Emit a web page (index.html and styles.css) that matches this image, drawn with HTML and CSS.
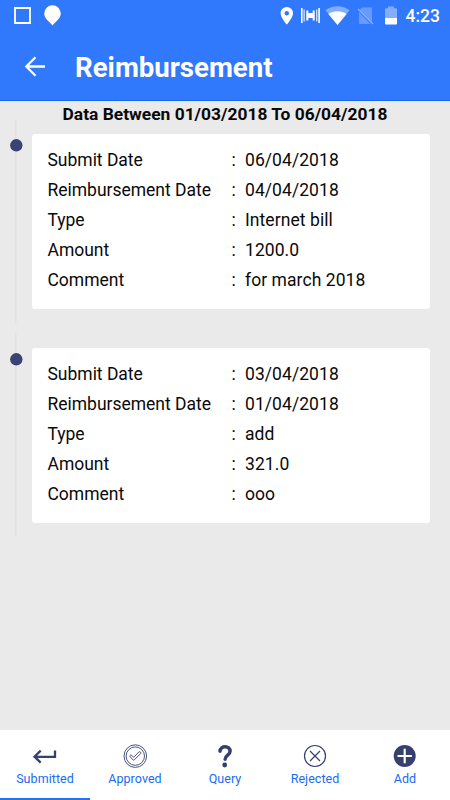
FILE: index.html
```html
<!DOCTYPE html>
<html lang="en">
<head>
<meta charset="utf-8">
<title>Reimbursement</title>
<link rel="stylesheet" href="styles.css">
</head>
<body>
<header class="header">
  <div class="status">
    <svg class="status-left" width="64" height="32" viewBox="0 0 64 32"><path d="M15 8h15v15H15z" fill="none" stroke="#fff" stroke-width="1.800"/><path d="M52.500 5.300a8.300 8.300 0 0 1 8.300 8.300c0 5-5.300 8.200-8.300 12-3-3.800-8.300-7-8.300-12a8.300 8.300 0 0 1 8.300-8.300z" fill="#fff"/></svg>
    <svg class="status-right" width="130" height="32" viewBox="0 0 130 32">
      <path fill="#fff" fill-rule="evenodd" d="M16.800 7a6.200 6.200 0 0 0-6.200 6.200c0 4.500 6.200 11.300 6.200 11.300s6.200-6.800 6.200-11.300A6.200 6.200 0 0 0 16.800 7zm0 4a2.200 2.200 0 1 1 0 4.400 2.200 2.200 0 0 1 0-4.400z"/>
      <path fill="#fff" d="M31 8h1.600v15H31zM33.600 9.500h1v12h-1zM36.300 10.500h2v2.500h4.400v-2.500h2v10h-2V18h-4.400v2.500h-2zM46.300 9.500h1v12h-1zM48.300 8h1.600v15h-1.600z"/>
      <path fill="#83adff" d="M55.500 10.300c7-5.300 17-5.300 24 0L67.500 25z"/>
      <path fill="#fff" d="M58.400 14c5-3.700 13.200-3.700 18.200 0L67.500 25z"/>
      <path fill="#6799ff" d="M92 7.500h9a1 1 0 0 1 1 1v14L89.500 10zM89 12l11.500 12H90a1 1 0 0 1-1-1z"/>
      <path d="M88 9l15 15" fill="none" stroke="#8bb2ff" stroke-width="1.300"/>
      <path fill="#83adff" d="M118 6.500v1.800h-2a1 1 0 0 0-1 1V18h12V9.300a1 1 0 0 0-1-1h-2V6.500z"/>
      <path fill="#fff" d="M115 18h12v5.500a1 1 0 0 1-1 1h-10a1 1 0 0 1-1-1z"/>
    </svg>
    <span class="clock">4:23</span>
  </div>
  <div class="toolbar">
    <svg class="back" width="22" height="22" viewBox="0 0 22 22"><path d="M21 10.500H2.500M11.500 1.300L2.300 10.500l9.200 9.200" fill="none" stroke="#fff" stroke-width="2.300"/></svg>
    <h1 class="title">Reimbursement</h1>
  </div>
</header>
<main class="content">
  <h2 class="range"><span class="range-text">Data Between 01/03/2018 To 06/04/2018</span></h2>
  <section class="entry">
    <div class="rail"><svg class="dot" width="14" height="14" viewBox="0 0 14 14"><circle cx="6.300" cy="6.300" r="6.200"/></svg></div>
    <dl class="card">
      <dt>Submit Date</dt><dd>06/04/2018</dd>
      <dt>Reimbursement Date</dt><dd>04/04/2018</dd>
      <dt>Type</dt><dd>Internet bill</dd>
      <dt>Amount</dt><dd>1200.0</dd>
      <dt>Comment</dt><dd>for march 2018</dd>
    </dl>
  </section>
  <section class="entry">
    <div class="rail"><svg class="dot" width="14" height="14" viewBox="0 0 14 14"><circle cx="6.300" cy="6.300" r="6.200"/></svg></div>
    <dl class="card">
      <dt>Submit Date</dt><dd>03/04/2018</dd>
      <dt>Reimbursement Date</dt><dd>01/04/2018</dd>
      <dt>Type</dt><dd>add</dd>
      <dt>Amount</dt><dd>321.0</dd>
      <dt>Comment</dt><dd>ooo</dd>
    </dl>
  </section>
</main>
<nav class="tabs">
  <a class="tab active"><svg width="26" height="26" viewBox="0 0 26 26"><path d="M23 7.500v6.300H3M8.700 7.700L2.500 13.700l6.200 6" fill="none" stroke="#36406f" stroke-width="2.300"/></svg><span>Submitted</span></a>
  <a class="tab"><svg width="26" height="26" viewBox="0 0 26 26" fill="none" stroke="#36406f" stroke-width=".9"><circle cx="13.300" cy="13.100" r="11.300"/><circle cx="13.300" cy="13.100" r="9.200"/><path d="M7.700 13.100c.5-.9 1.300-1.400 2-.8l2 2 5-5.200c1.200-1 2.700.2 1.900 1.500l-6.200 6.200c-.5.500-1.100.5-1.600 0z" stroke-linejoin="round"/></svg><span>Approved</span></a>
  <a class="tab"><svg width="26" height="26" viewBox="0 0 26 26"><path d="M8 8.200c.4-6.100 10.200-6 10.100.1 0 3.900-5 3.800-5 8" fill="none" stroke="#36406f" stroke-width="3.500" stroke-linecap="round"/><circle cx="12.700" cy="22" r="2.400" fill="#36406f"/></svg><span>Query</span></a>
  <a class="tab"><svg width="26" height="26" viewBox="0 0 26 26" fill="none" stroke="#36406f" stroke-width="1.200"><circle cx="13" cy="13" r="10.500"/><path d="M8 8l10 10m0-10l-10 10"/></svg><span>Rejected</span></a>
  <a class="tab"><svg width="26" height="26" viewBox="0 0 26 26"><circle cx="12.700" cy="13" r="11" fill="#36406f"/><path d="M12.700 5.800v14.400M5.500 13h14.400" stroke="#fff" stroke-width="2.200"/></svg><span>Add</span></a>
</nav>
</body>
</html>
```
FILE: styles.css
```css
* { box-sizing: border-box; margin: 0; padding: 0; }
body {
  width: 450px;
  height: 800px;
  display: flex;
  flex-direction: column;
  overflow: hidden;
  background: #eaeaea;
  color: #0a0a0a;
  font-family: Roboto, "Liberation Sans", sans-serif;
}
.header { height: 101px; background: #3078fc; border-bottom: 1px solid #1767f5; color: #fff; }
.status { height: 32px; display: flex; }
.status-right { margin-left: 206px; }
.clock { margin-left: 5.500px; font-size: 17.500px; line-height: 33px; font-weight: 500; }
.toolbar { height: 69px; display: flex; align-items: center; padding-left: 24px; }
.title { margin-left: 29px; padding-top: 2px; font-size: 27.600px; line-height: 32px; font-weight: 700; }
.back, .title { flex: none; }
.content { flex: 1; }
.range { height: 18px; font-size: 17.400px; line-height: 27px; font-weight: 700; text-align: center; white-space: nowrap; }
.entry { height: 204px; margin-bottom: 10px; display: flex; }
.rail { width: 32px; padding: 20px 0 0 10px; background: linear-gradient(#e2e2e2, #e2e2e2) 15px 0 / 1.500px 100% no-repeat; }
.dot { display: block; fill: #3a4474; }
.card {
  width: 398px;
  height: 175px;
  margin-top: 15px;
  padding: 11px 15.500px;
  border-radius: 3px;
  background: #fff;
  display: grid;
  grid-template-columns: 184px 1fr;
  grid-auto-rows: 30px;
  align-content: start;
  font-size: 17.500px;
  line-height: 31px;
}
.card dt { letter-spacing: -.02px; }
.card dd { display: flex; letter-spacing: .07px; }
.card dd::before { content: ":"; width: 13.500px; }
.tabs { height: 70px; display: flex; background: #fff; }
.tab {
  width: 90px;
  padding-top: 13px;
  display: flex;
  flex-direction: column;
  align-items: center;
  color: #186bf5;
  font-size: 12.500px;
  line-height: 19px;
  letter-spacing: .06px;
}
.tab svg { flex: none; }
.active { border-bottom: 2px solid #2474fa; }
```
